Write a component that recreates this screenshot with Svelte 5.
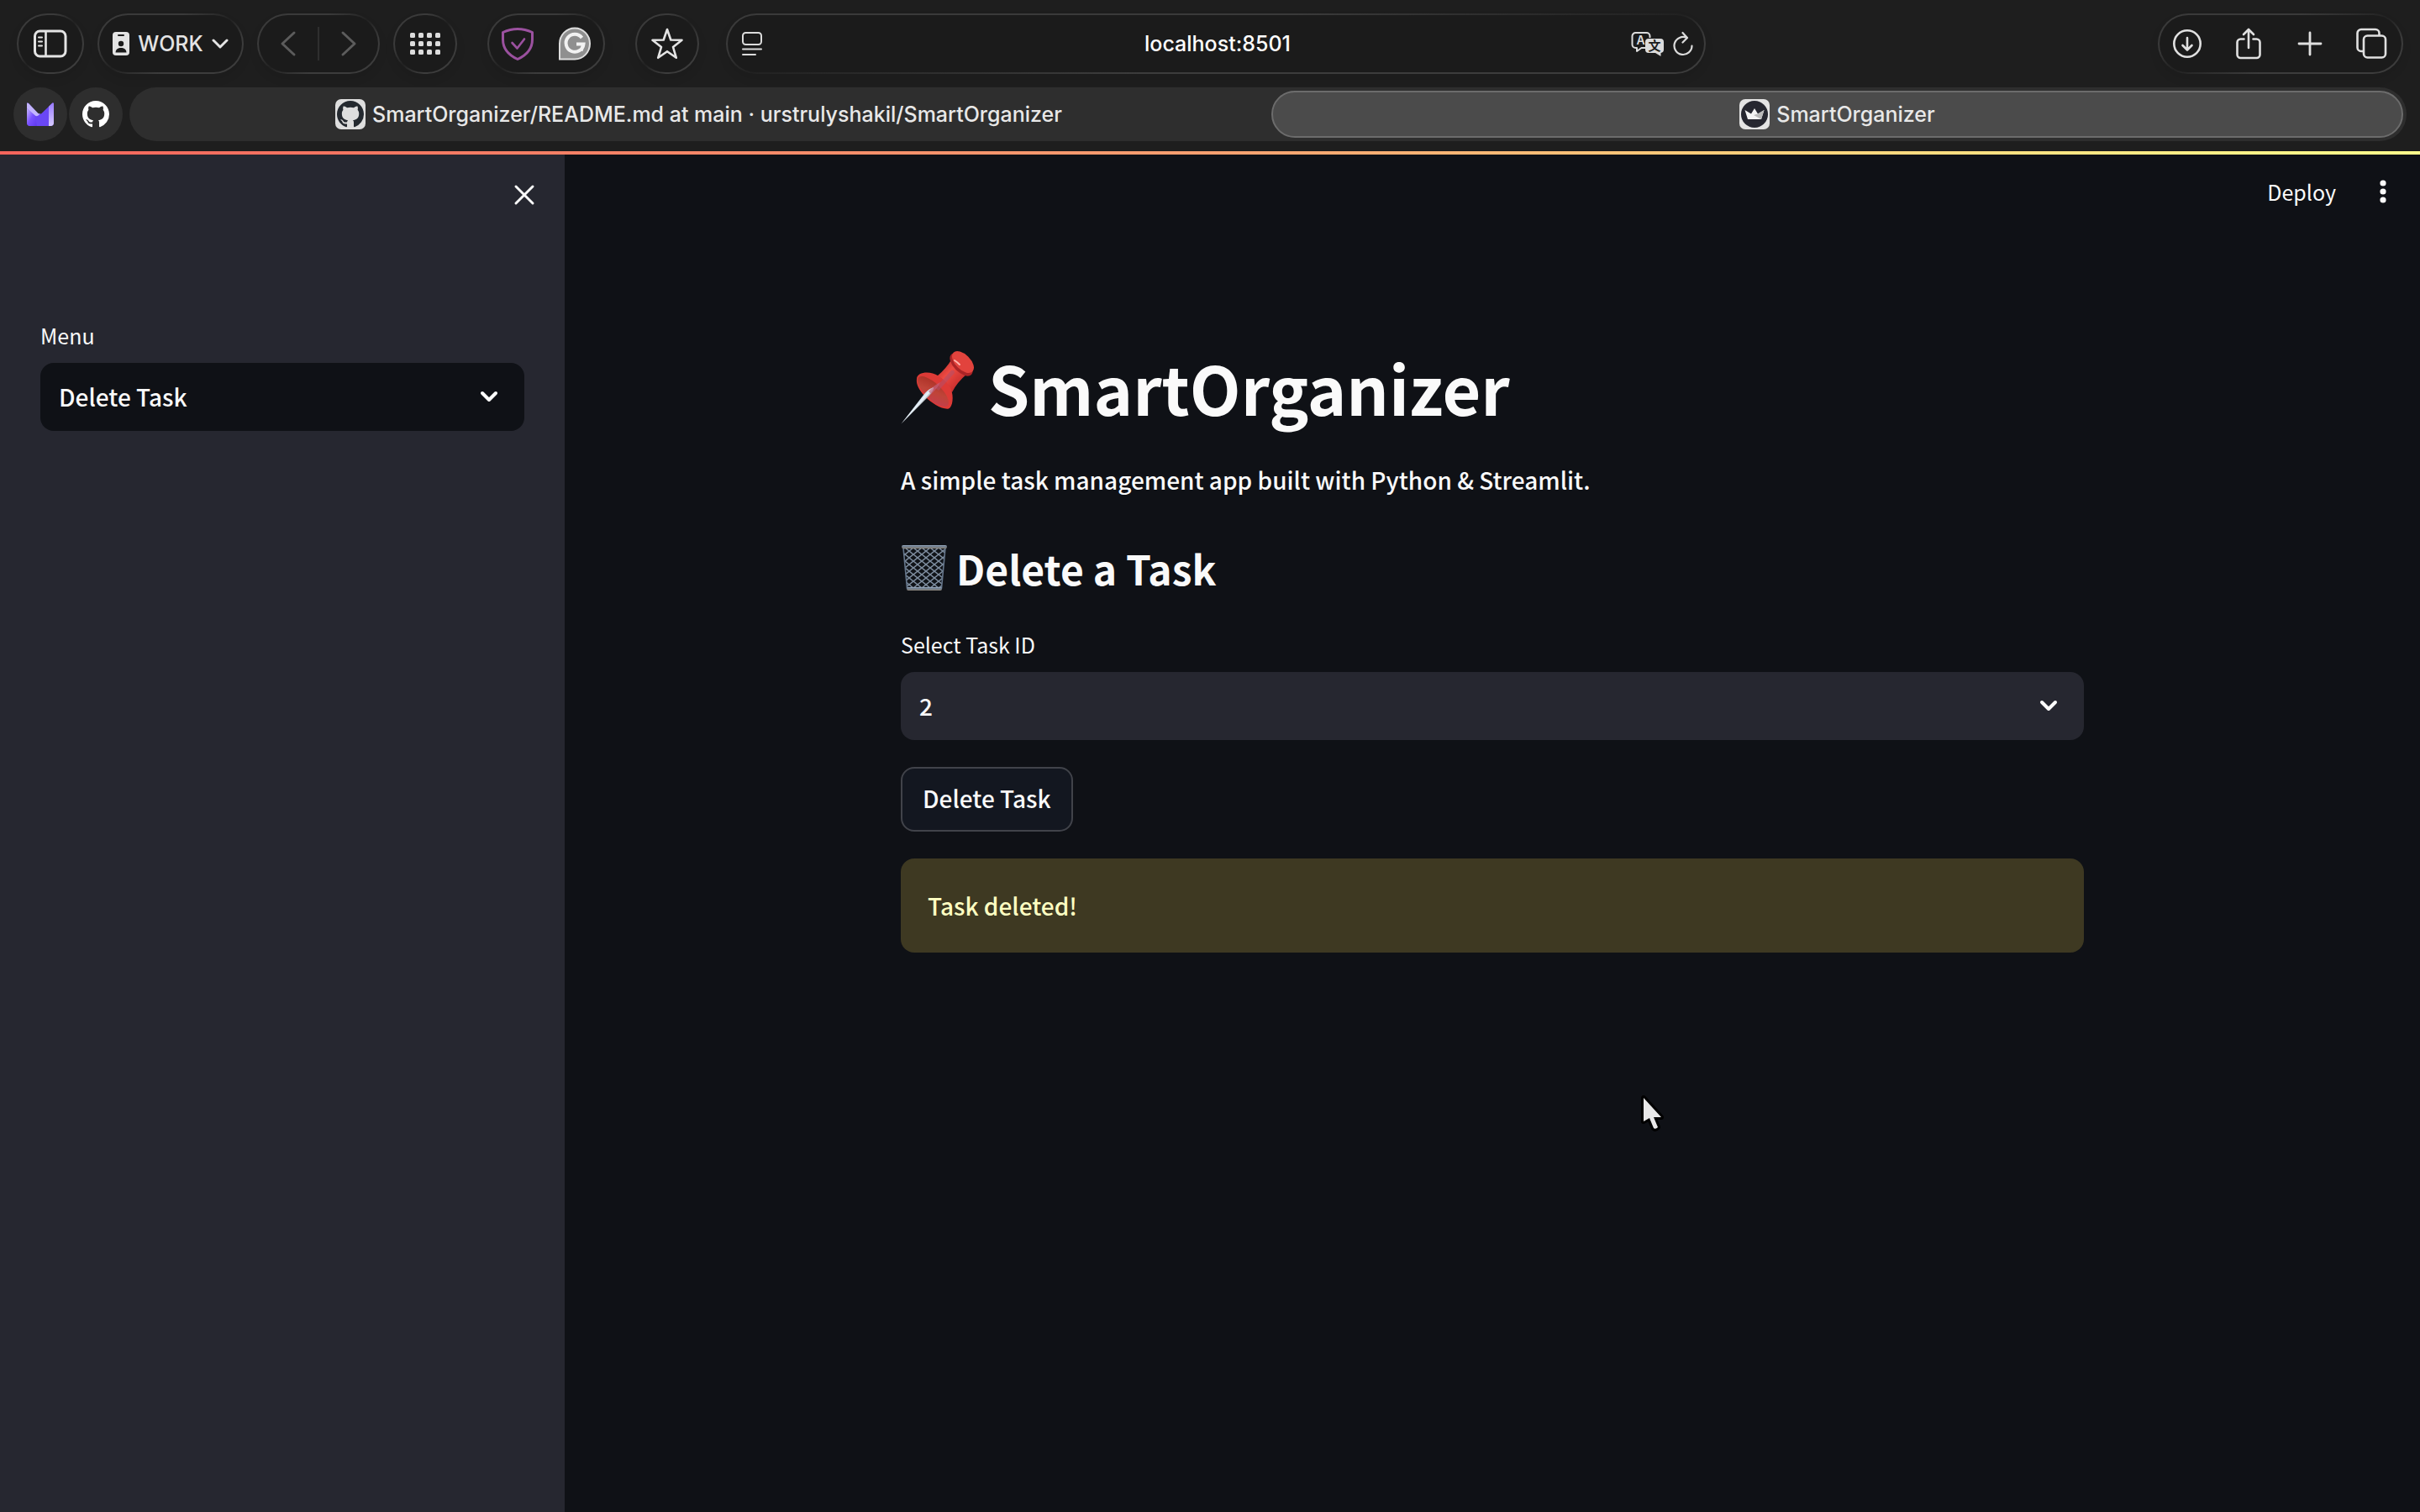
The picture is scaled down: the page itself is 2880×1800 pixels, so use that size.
<script>
  const pages = ['Add Task', 'View Tasks', 'Update Task', 'Delete Task'];
  const taskIds = ['1', '2', '3'];
  let page = $state('Delete Task');
  let taskId = $state('2');
  const octocat =
    'M8 0C3.58 0 0 3.58 0 8c0 3.54 2.29 6.53 5.47 7.59.4.07.55-.17.55-.38 0-.19-.01-.82-.01-1.49-2.01.37-2.53-.49-2.69-.94-.09-.23-.48-.94-.82-1.13-.28-.15-.68-.52-.01-.53.63-.01 1.08.58 1.23.82.72 1.21 1.87.87 2.33.66.07-.52.28-.87.51-1.07-1.78-.2-3.64-.89-3.64-3.95 0-.87.31-1.59.82-2.15-.08-.2-.36-1.02.08-2.12 0 0 .67-.21 2.2.82.64-.18 1.32-.27 2-.27.68 0 1.36.09 2 .27 1.53-1.04 2.2-.82 2.2-.82.44 1.1.16 1.92.08 2.12.51.56.82 1.27.82 2.15 0 3.07-1.87 3.75-3.65 3.95.29.25.54.73.54 1.48 0 1.07-.01 1.93-.01 2.2 0 .21.15.46.55.38A8.013 8.013 0 0016 8c0-4.42-3.58-8-8-8z';
</script>

{#snippet chevron()}
  <svg class="chevron" width="24" height="17" viewBox="0 0 24 17" aria-hidden="true">
    <path d="M4 4l8 8 8-8" fill="none" stroke="#fff" stroke-width="4" stroke-linecap="round" stroke-linejoin="round" />
  </svg>
{/snippet}

<div class="window">
  <header class="browser">
    <div class="toolbar">
      <button class="pill side" aria-label="Show sidebar">
        <svg width="40" height="34" viewBox="0 0 40 34" fill="none" stroke="#e4e4e4">
          <rect x="1.5" y="2" width="36.500" height="30" rx="6" stroke-width="3" />
          <path d="M14.500 2v30" stroke-width="2.600" />
          <path d="M6 9.500h4M6 14.500h4M6 19.500h4" stroke-width="2" stroke-linecap="round" />
        </svg>
      </button>
      <button class="pill work">
        <svg width="20" height="28" viewBox="0 0 20 28">
          <rect width="20" height="28" rx="4" fill="#e4e4e4" />
          <rect x="6" y="3" width="8" height="2" rx="1" fill="#1b1b1b" />
          <circle cx="10" cy="14" r="3.200" fill="#1b1b1b" />
          <path d="M3.500 24.500c.3-4 3-5.500 6.500-5.500s6.200 1.500 6.500 5.500z" fill="#1b1b1b" />
        </svg>
        <span>WORK</span>
        <svg width="20" height="14" viewBox="0 0 20 14" fill="none" stroke="#e4e4e4" stroke-width="3" stroke-linecap="round" stroke-linejoin="round">
          <path d="M2 3l8 8 8-8" />
        </svg>
      </button>
      <div class="pill nav">
        <button aria-label="Back">
          <svg width="20" height="32" viewBox="0 0 20 32" fill="none" stroke="#5c5c5c" stroke-width="3" stroke-linecap="round" stroke-linejoin="round"><path d="M17 3L3 16l14 13" /></svg>
        </button>
        <span class="divider"></span>
        <button aria-label="Forward">
          <svg width="20" height="32" viewBox="0 0 20 32" fill="none" stroke="#5c5c5c" stroke-width="3" stroke-linecap="round" stroke-linejoin="round"><path d="M3 3l14 13L3 29" /></svg>
        </button>
      </div>
      <button class="pill apps" aria-label="Tab groups">
        <svg width="36" height="26" viewBox="0 0 36 26" fill="#dcdcdc">
          {#each [0, 10, 20] as y}
            {#each [0, 10, 20, 30] as x}
              <rect {x} {y} width="6" height="6" rx="1.500" />
            {/each}
          {/each}
        </svg>
      </button>
      <div class="pill extensions">
        <button aria-label="Ad blocker">
          <svg width="40" height="40" viewBox="0 0 40 40" fill="none" stroke="#9b519f" stroke-linecap="round" stroke-linejoin="round">
            <path d="M20 2.500c6 0 12 1.500 17.500 4v8.500c0 11-6.500 18.500-17.500 23.500C9 33.500 2.500 26 2.500 15V6.500C8 4 14 2.500 20 2.500z" stroke-width="3" />
            <path d="M13.500 19l6 6.500 8.500-11" stroke-width="2.600" />
          </svg>
        </button>
        <button aria-label="Writing assistant">
          <svg width="40" height="40" viewBox="0 0 40 40">
            <path d="M2 38.500V20a18 18.500 0 1 1 18 18.500z" fill="#8f8f8f" stroke="#dedede" stroke-width="2" />
            <path d="M28.500 13A10.500 10.500 0 1 0 30.500 20.500H22M30.500 20.500l-3 8" fill="none" stroke="#f2f2f2" stroke-width="4" />
          </svg>
        </button>
      </div>
      <button class="pill star" aria-label="Bookmark">
        <svg width="40" height="40" viewBox="0 0 40 40" fill="none" stroke="#e4e4e4" stroke-width="2.600" stroke-linejoin="round">
          <path d="M20 3l4.300 12.500L37.500 15.800 27 24l3.800 12.800L20 29.200 9.200 36.800 13 24 2.500 15.800l13.200-.3z" />
        </svg>
      </button>
      <div class="pill address">
        <button aria-label="Page menu">
          <svg width="24" height="28" viewBox="0 0 24 28" fill="none" stroke="#dcdcdc" stroke-width="2" stroke-linecap="round">
            <rect x="1" y="1" width="22" height="14" rx="3.500" /><path d="M1 20.500h22M1 27h15" />
          </svg>
        </button>
        <input type="text" aria-label="Address" value="localhost:8501" />
        <button aria-label="Translate">
          <svg width="40" height="30" viewBox="0 0 40 30">
            <path d="M17 20h-4.500L7 24v-4H5.500A4 4 0 0 1 1.500 16V6A4 4 0 0 1 5.500 2h13A4 4 0 0 1 22.500 6v2" fill="none" stroke="#dcdcdc" stroke-width="2" stroke-linejoin="round" />
            <path d="M21 9h14a4 4 0 0 1 4 4v9a4 4 0 0 1-3.500 4v4L29 26h-8a4 4 0 0 1-4-4v-9a4 4 0 0 1 4-4z" fill="#dcdcdc" />
            <text class="latin" x="11.500" y="16">A</text>
            <text class="han" x="28" y="23">文</text>
          </svg>
        </button>
        <button aria-label="Reload">
          <svg width="24" height="30" viewBox="0 0 24 30" fill="none" stroke="#dcdcdc" stroke-width="2.200" stroke-linecap="round" stroke-linejoin="round">
            <path d="M22.500 17.500A10.500 10.500 0 1 1 16.500 8M11.500 2l5.500 6-5.500 5.500" />
          </svg>
        </button>
      </div>
      <div class="pill actions">
        <button aria-label="Downloads">
          <svg width="38" height="38" viewBox="0 0 38 38" fill="none" stroke="#e0e0e0" stroke-width="2.600" stroke-linecap="round" stroke-linejoin="round">
            <circle cx="19" cy="19" r="15.700" /><path d="M19 12v14M13.500 21l5.500 5.500 5.500-5.500" />
          </svg>
        </button>
        <button aria-label="Share">
          <svg width="38" height="38" viewBox="0 0 38 38" fill="none" stroke="#e0e0e0" stroke-width="2.600" stroke-linecap="round" stroke-linejoin="round">
            <path d="M13.500 13.500H9.500a4 4 0 0 0-4 4V32a4 4 0 0 0 4 4h19a4 4 0 0 0 4-4V17.500a4 4 0 0 0-4-4h-4M19 24V2M13 8l6-6 6 6" />
          </svg>
        </button>
        <button aria-label="New tab">
          <svg width="38" height="38" viewBox="0 0 38 38" fill="none" stroke="#e0e0e0" stroke-width="2.800" stroke-linecap="round"><path d="M19 6v26M6 19h26" /></svg>
        </button>
        <button aria-label="Tab overview">
          <svg width="38" height="38" viewBox="0 0 38 38" fill="none" stroke="#e0e0e0" stroke-width="2.600" stroke-linejoin="round">
            <rect x="10" y="9.500" width="26" height="26" rx="4.500" />
            <path d="M10 28H7a4.500 4.500 0 0 1-4.500-4.500V6.500A4.500 4.500 0 0 1 7 2h17a4.500 4.500 0 0 1 4.500 4.500v3" />
          </svg>
        </button>
      </div>
    </div>

    <nav class="tabs" aria-label="Tabs">
      <a class="pin" href="#mail" aria-label="Mail">
        <svg width="32" height="28" viewBox="0 0 32 28">
          <defs>
            <linearGradient id="mailFront" x1="0" y1="0" x2="1" y2="1"><stop offset="0" stop-color="#c9b8ff" /><stop offset=".5" stop-color="#7a52ff" /><stop offset="1" stop-color="#5e38f0" /></linearGradient>
            <linearGradient id="mailSide" x1="0" y1="0" x2="0" y2="1"><stop offset="0" stop-color="#9a7cff" /><stop offset="1" stop-color="#d6caff" /></linearGradient>
          </defs>
          <path d="M0 1.500C0 .3 1 .2 2 1l11 12.500h4L30 1c1-.8 2-.5 2 .5V24a4 4 0 0 1-4 4H4a4 4 0 0 1-4-4z" fill="#6a47f5" />
          <path d="M0 1.500C0 .3 1 .2 2 1l11 11.500q2 2 4-.3l-3.500 3.300q-2 1.500-4 0L0 7z" fill="#c3b4ff" />
          <path d="M0 7l9.500 8.500L12 28H4a4 4 0 0 1-4-4z" fill="url(#mailFront)" />
          <path d="M26 4.800L30 1c1-.8 2-.5 2 .5V24a4 4 0 0 1-4 4h-2z" fill="url(#mailSide)" />
        </svg>
      </a>
      <a class="pin github" href="#github" aria-label="GitHub">
        <svg width="32" height="32" viewBox="0 0 16 16" fill="#fff"><path d={octocat} /></svg>
      </a>
      <div class="strip">
        <a class="tab" href="#readme">
          <svg width="36" height="36" viewBox="0 0 36 36">
            <rect width="36" height="36" rx="7" fill="#dedede" />
            <svg x="2" y="2" width="32" height="32" viewBox="0 0 16 16"><path d={octocat} fill="#24292f" /></svg>
          </svg>
          <span>SmartOrganizer/README.md at main · urstrulyshakil/SmartOrganizer</span>
        </a>
        <a class="tab active" href="#app" aria-current="page">
          <svg width="36" height="36" viewBox="0 0 36 36">
            <rect width="36" height="36" rx="7" fill="#e4e4e4" />
            <circle cx="18" cy="18" r="16" fill="#262730" />
            <path d="M6.500 13l7.500 4.500L18 11l4 6.500 7.500-4.500L26 24H10z" fill="#f4f4f4" />
            <path d="M17 19l5-1.500 7.500-4.500L26 24z" fill="#b9b9b9" />
          </svg>
          <span>SmartOrganizer</span>
        </a>
      </div>
    </nav>
  </header>

  <div class="rainbow"></div>

  <div class="app">
    <aside>
      <div class="close-row">
        <button aria-label="Close sidebar">
          <svg width="28" height="28" viewBox="0 0 28 28" fill="none" stroke="#fafafa" stroke-width="3" stroke-linecap="round"><path d="M4 4l20 20M24 4L4 24" /></svg>
        </button>
      </div>
      <div class="field">
        <label for="page">Menu</label>
        <div class="picker dark">
          <select id="page" bind:value={page}>
            {#each pages as name}<option value={name}>{name}</option>{/each}
          </select>
          {@render chevron()}
        </div>
      </div>
    </aside>

    <main>
      <div class="app-bar">
        <button class="deploy">Deploy</button>
        <button aria-label="Main menu">
          <svg width="12" height="32" viewBox="0 0 12 32" fill="#fafafa"><circle cx="6" cy="6" r="3.600" /><circle cx="6" cy="16" r="3.600" /><circle cx="6" cy="26" r="3.600" /></svg>
        </button>
      </div>

      <section class="content">
        <h1>
          <svg width="88" height="88" viewBox="0 0 88 88" aria-hidden="true">
            <defs>
              <linearGradient id="needle" x1="0" y1="0" x2="1" y2="1"><stop offset=".3" stop-color="#7f9db8" /><stop offset=".5" stop-color="#eaf4fb" /><stop offset=".62" stop-color="#3c3a3a" /><stop offset="1" stop-color="#97806a" /></linearGradient>
              <linearGradient id="body" x1="0" y1="0" x2="1" y2="1"><stop offset=".1" stop-color="#b92c2b" /><stop offset=".4" stop-color="#ee4a42" /><stop offset=".9" stop-color="#b92426" /></linearGradient>
              <linearGradient id="cup" x1="0" y1="0" x2="1" y2="1"><stop offset="0" stop-color="#a72c22" /><stop offset=".5" stop-color="#bf4438" /><stop offset="1" stop-color="#c63c50" /></linearGradient>
            </defs>
            <path d="M61 10Q54 22 43 31L61 50Q67 38 79 28z" fill="url(#body)" />
            <ellipse cx="72" cy="17" rx="17" ry="9" transform="rotate(45 72 17)" fill="#ab2426" />
            <ellipse cx="74" cy="14" rx="16" ry="9" transform="rotate(45 74 14)" fill="#e2433d" />
            <path d="M64 12q3 2 6 5" fill="none" stroke="#ffb3ab" stroke-width="2" stroke-linecap="round" />
            <path d="M19 34C19 27 30 25 38 27.500 47 30 57 39 60 47 63 55 62 67 57 69.500 50 71 36 63 28 54 22 47 18 41 19 34z" fill="#dd3a36" />
            <ellipse cx="38.500" cy="49" rx="24" ry="9.500" transform="rotate(44 38.500 49)" fill="url(#cup)" />
            <path d="M41 45l19-21q4-1 4 3L45 48z" fill="#b0506a" opacity=".55" />
            <path d="M.5 87.500L28 52q5-6 11-8 1 3-5 10z" fill="url(#needle)" />
            <path d="M33 49q6-7 14-11-3 7-11 14z" fill="#c5607a" opacity=".7" />
          </svg>
          <span>SmartOrganizer</span>
        </h1>
        <p class="lead">A simple task management app built with Python &amp; Streamlit.</p>
        <h2>
          <svg width="56" height="56" viewBox="0 0 56 56" aria-hidden="true">
            <defs>
              <pattern id="mesh" width="10" height="8" patternUnits="userSpaceOnUse"><path d="M0 0l10 8M10 0L0 8" stroke="#7d8c9e" stroke-width="1.400" /></pattern>
              <linearGradient id="rim" x1="0" y1="0" x2="0" y2="1"><stop offset="0" stop-color="#9fb2c7" /><stop offset=".5" stop-color="#667382" /><stop offset="1" stop-color="#9a8f80" /></linearGradient>
            </defs>
            <path d="M3 4h50l-4.500 48h-41z" fill="#101318" />
            <path d="M3 4h50l-4.500 48h-41z" fill="url(#mesh)" stroke="#64758a" stroke-width="1.600" />
            <rect x="1" y="1" width="54" height="4" rx="2" fill="url(#rim)" />
            <rect x="7" y="51" width="42" height="4" rx="2" fill="url(#rim)" />
          </svg>
          <span>Delete a Task</span>
        </h2>
        <div class="field">
          <label for="task">Select Task ID</label>
          <div class="picker">
            <select id="task" bind:value={taskId}>
              {#each taskIds as id}<option value={id}>{id}</option>{/each}
            </select>
            {@render chevron()}
          </div>
        </div>
        <button class="delete">Delete Task</button>
        <div class="alert" role="alert">Task deleted!</div>
      </section>
    </main>
  </div>

  <svg class="pointer" width="30" height="44" viewBox="0 0 30 44" aria-hidden="true">
    <path d="M4 3v28l7-4 5 12q2 2 5-1l-5-12h9z" fill="#e8e8e8" stroke="#000" stroke-width="6" stroke-linejoin="round" />
    <path d="M4 3v28l7-4 5 12q2 2 5-1l-5-12h9z" fill="#e8e8e8" />
  </svg>
</div>

<style>
  :global(body) {
    background: #0f1116;
  }
  .window {
    position: relative;
    min-height: 100vh;
    display: flex;
    flex-direction: column;
    color: #fafafa;
    font-family: 'Noto Sans CJK SC', 'Noto Sans', sans-serif;
    font-weight: 500;
  }
  svg {
    display: block;
    flex: none;
  }
  button,
  input,
  select {
    font: inherit;
    color: inherit;
    background: none;
    border: 0;
    margin: 0;
    padding: 0;
  }
  a {
    color: inherit;
    text-decoration: none;
  }

  .browser {
    background: #1e1e1e;
    font-family: Inter, 'Liberation Sans', sans-serif;
    font-size: 25px;
    line-height: 32px;
    padding-bottom: 12px;
  }
  .toolbar {
    display: flex;
    gap: 16px;
    padding: 16px 20px;
  }
  .pill {
    box-sizing: border-box;
    height: 72px;
    display: flex;
    align-items: center;
    justify-content: center;
    flex: none;
    border: 2px solid transparent;
    border-radius: 36px;
    background:
      linear-gradient(#1b1b1b, #1b1b1b) padding-box,
      linear-gradient(to bottom right, #3a3a3a 0 30%, #212121 50%, #3c3c3c 70% 100%) border-box;
    box-shadow: 0 6px 12px rgba(0, 0, 0, 0.08);
  }
  .side {
    width: 80px;
  }
  .work {
    width: 174px;
    gap: 10px;
    color: #e4e4e4;
  }
  .nav {
    width: 146px;
    gap: 25px;
  }
  .divider {
    width: 2px;
    height: 40px;
    background: #2f2f2f;
  }
  .apps {
    width: 76px;
  }
  .extensions {
    width: 140px;
    gap: 28px;
    margin-left: 20px;
  }
  .star {
    width: 76px;
    margin-left: 20px;
  }
  .address {
    flex: 0 1 1166px;
    margin-left: 16px;
    padding: 0 13px 0 17px;
    gap: 10px;
  }
  .address input {
    flex: 1;
    min-width: 0;
    text-align: center;
    color: #fff;
    outline: 0;
    padding-left: 50px;
  }
  .latin,
  .han {
    text-anchor: middle;
    font-size: 14px;
    font-weight: 600;
    fill: #dcdcdc;
  }
  .han {
    font-family: 'Noto Sans CJK SC', sans-serif;
    font-size: 15px;
    fill: #1b1b1b;
  }
  .actions {
    width: 292px;
    margin-left: auto;
    padding-right: 4px;
    gap: 35px;
  }

  .tabs {
    display: flex;
    padding: 0 16px;
    gap: 2px;
  }
  .pin {
    width: 64px;
    height: 64px;
    border-radius: 32px;
    background: #2e2e2e;
    display: flex;
    align-items: center;
    justify-content: center;
  }
  .github {
    margin-right: 6px;
  }
  .strip {
    flex: 1;
    display: flex;
    gap: 8px;
    box-sizing: border-box;
    height: 64px;
    padding: 4px;
    border-radius: 32px;
    background: #2e2e2e;
  }
  .tab {
    flex: 1;
    box-sizing: border-box;
    display: flex;
    align-items: center;
    justify-content: center;
    gap: 8px;
    color: #e8e8e8;
    border: 2px solid transparent;
    border-radius: 28px;
  }
  .active {
    background: #4b4b4b;
    border-color: #6c6c6c;
  }

  .rainbow {
    height: 4px;
    background: linear-gradient(to right, #f4645c, #f8a070 50%, #fdcb7a 70%, #ffff8c);
  }

  .app {
    flex: 1;
    display: flex;
  }
  aside {
    flex: 0 0 576px;
    padding: 32px 48px;
    background: #262730;
  }
  .close-row {
    display: flex;
    justify-content: flex-end;
    margin: 2px -14px 133px 0;
  }
  main {
    flex: 1;
    background: #0f1116;
  }
  .app-bar {
    display: flex;
    justify-content: flex-end;
    align-items: center;
    gap: 50px;
    padding: 24px 38px 0 0;
  }
  .deploy,
  label {
    font-size: 25px;
    line-height: 40px;
    font-weight: 400;
  }
  .content {
    box-sizing: border-box;
    max-width: 1440px;
    margin: 0 auto;
    padding: 160px 16px 0;
  }
  h1,
  h2 {
    display: flex;
    align-items: center;
    margin: 0;
    font-weight: 700;
  }
  h1 {
    gap: 16px;
    font-size: 79px;
    line-height: 106px;
  }
  .lead {
    margin: 33px 0 0;
    font-size: 28px;
    line-height: 48px;
  }
  h2 {
    gap: 10px;
    margin-top: 47px;
    font-size: 48px;
    line-height: 68px;
  }
  .field {
    display: flex;
    flex-direction: column;
    gap: 13px;
  }
  .content .field {
    margin-top: 37px;
  }
  .picker {
    display: grid;
    align-items: center;
    height: 81px;
    border-radius: 16px;
    background: #262730;
  }
  .picker > :global(*) {
    grid-area: 1 / 1;
  }
  .dark {
    background: #0f1116;
  }
  select {
    appearance: none;
    width: 100%;
    height: 100%;
    padding: 0 64px 2px 22px;
    font-size: 28px;
  }
  .chevron {
    justify-self: end;
    margin-right: 30px;
    pointer-events: none;
  }
  .delete {
    box-sizing: border-box;
    height: 77px;
    margin-top: 32px;
    padding: 0 24px 4px;
    border: 2px solid #41434a;
    border-radius: 16px;
    background: #131720;
    font-size: 28px;
  }
  .alert {
    margin-top: 32px;
    padding: 32px;
    border-radius: 16px;
    background: #3e3922;
    color: #ffffc2;
    font-size: 28px;
    line-height: 48px;
  }
  .pointer {
    position: absolute;
    left: 1952px;
    top: 1304px;
  }
</style>
